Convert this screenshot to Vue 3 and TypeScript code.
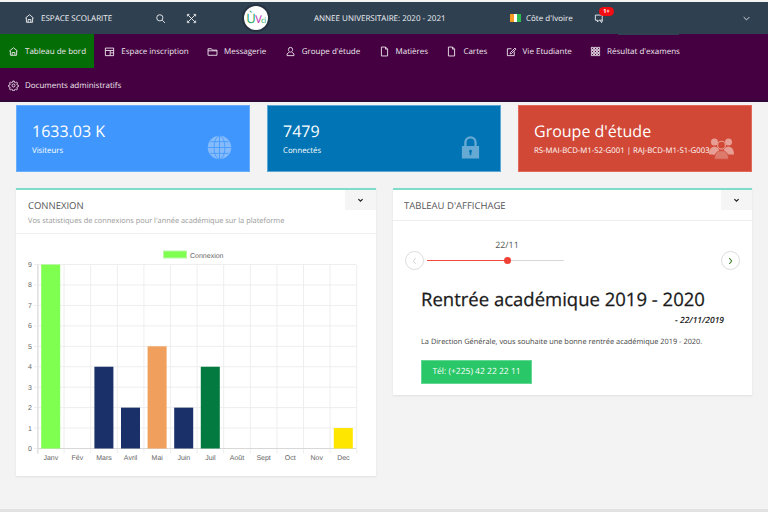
<template>
  <div class="page">
    <header class="topbar">
      <div class="brand">
        <svg class="ico" viewBox="0 0 16 16"><path d="M2 7.500 8 2.500l6 5M3.500 7v6.500h9V7M6 13.500V9.500h4v4" /></svg>
        <span>ESPACE SCOLARITE</span>
      </div>
      <svg class="ico tool" viewBox="0 0 16 16"><circle cx="7" cy="7" r="4.500" /><path d="m10.500 10.500 4 4" /></svg>
      <svg class="ico tool expand" viewBox="0 0 16 16"><path d="M3 3l10 10M13 3 3 13M2 5V2h3M11 2h3v3M14 11v3h-3M5 14H2v-3" /></svg>
      <div class="logo"><span class="logo-mark"><b class="u">Ù</b><b class="v">V</b><b class="c">ci</b></span></div>
      <div class="year">ANNEE UNIVERSITAIRE: 2020 - 2021</div>
      <div class="country">
        <span class="flag"><i class="o"></i><i class="w"></i><i class="g"></i></span>
        <span>Côte d'Ivoire</span>
      </div>
      <div class="chat">
        <svg class="ico" viewBox="0 0 16 16"><path d="M2 3h10v7.500H7.500L5 13v-2.500H2zM9 11l2 3 1.500-3.500" /></svg>
        <span class="badge">1+</span>
      </div>
      <div class="user-tab"></div>
      <svg class="caret" viewBox="0 0 10 6"><path d="m1 1 4 4 4-4" /></svg>
    </header>

    <nav class="menu">
      <a v-for="item in menu" :key="item.label" class="menu-item" :class="{ active: item.active }">
        <svg class="ico" viewBox="0 0 16 16"><path :d="item.icon" /></svg>
        <span>{{ item.label }}</span>
      </a>
    </nav>

    <section class="stats">
      <div v-for="s in stats" :key="s.title" class="stat" :class="s.cls">
        <div class="stat-title">{{ s.title }}</div>
        <div class="stat-sub">{{ s.sub }}</div>
        <svg class="stat-icon" :class="s.cls + '-icon'" viewBox="0 0 32 32">
          <template v-if="s.cls === 'blue'">
            <circle cx="16" cy="16" r="15" fill="currentColor" />
            <ellipse cx="16" cy="16" rx="7" ry="15" fill="none" stroke="#3f97fe" stroke-width="1" />
            <path d="M16 1v30M1 16h30M4 8.500h24M4 23.500h24" fill="none" stroke="#3f97fe" stroke-width="1" />
          </template>
          <template v-else-if="s.cls === 'teal'">
            <path d="M9.500 14V9.500a6.500 6.500 0 0 1 13 0V14" fill="none" stroke="currentColor" stroke-width="3" />
            <path fill-rule="evenodd" d="M5 14h22v16H5zM16 19a2 2 0 0 0-1 3.700V26h2v-3.300A2 2 0 0 0 16 19z" fill="currentColor" />
          </template>
          <template v-else>
            <circle cx="7" cy="9" r="4.500" fill="currentColor" />
            <circle cx="25" cy="9" r="4.500" fill="currentColor" />
            <path d="M0 25c0-7 3-10 7-10s7 3 7 10zM18 25c0-7 3-10 7-10s7 3 7 10z" fill="currentColor" />
            <circle cx="16" cy="13" r="5" fill="#d14836" stroke="currentColor" stroke-width="1.500" />
            <path d="M7 31c0-8 4-11 9-11s9 3 9 11z" fill="#dc7a6c" stroke="#d14836" stroke-width="1" />
          </template>
        </svg>
      </div>
    </section>

    <section class="panels">
      <article class="panel chart-panel">
        <div class="panel-head tall">
          <h2>CONNEXION</h2>
          <p>Vos statistiques de connexions pour l'année académique sur la plateforme</p>
          <button class="collapse"><svg viewBox="0 0 10 6"><path d="m2 1 3 3 3-3" /></svg></button>
        </div>
        <svg class="chart" viewBox="0 0 360 242" width="360" height="242">
          <rect x="147.500" y="17" width="23" height="7" fill="#7fff50" stroke="#b9f7a4" />
          <text x="174" y="23.500" class="legend">Connexion</text>
          <g v-for="n in 10" :key="'h' + n">
            <line x1="18" x2="340" :y1="yOf(n - 1)" :y2="yOf(n - 1)" class="grid" />
            <text x="16" :y="yOf(n - 1) + 2.500" class="tick" text-anchor="end">{{ n - 1 }}</text>
          </g>
          <line v-for="n in 13" :key="'v' + n" :x1="xOf(n - 1)" :x2="xOf(n - 1)" :y1="yOf(9)" :y2="yOf(0) + 5" class="grid" />
          <line x1="22" x2="22" :y1="yOf(9)" :y2="yOf(0) + 5" class="axis" />
          <line x1="22" x2="340" :y1="yOf(0)" :y2="yOf(0)" class="axis" />
          <g v-for="(b, i) in bars" :key="b.label">
            <rect v-if="b.value" :x="xOf(i) + 3.700" :y="yOf(b.value)" width="19" :height="yOf(0) - yOf(b.value)" :fill="b.color" />
            <text :x="xOf(i) + 13.300" y="226" class="month" text-anchor="middle">{{ b.label }}</text>
          </g>
        </svg>
      </article>

      <article class="panel board-panel">
        <div class="panel-head">
          <h2>TABLEAU D'AFFICHAGE</h2>
          <button class="collapse"><svg viewBox="0 0 10 6"><path d="m2 1 3 3 3-3" /></svg></button>
        </div>
        <div class="timeline">
          <button class="round prev"><svg viewBox="0 0 6 10"><path d="M4.500 1.500 1.500 5l3 3.500" /></svg></button>
          <div class="track">
            <span class="date">22/11</span>
            <div class="line"><div class="fill" :style="{ width: progress + '%' }"></div><div class="dot"></div></div>
          </div>
          <button class="round next"><svg viewBox="0 0 6 10"><path d="M1.500 1.500 4.500 5l-3 3.500" /></svg></button>
        </div>
        <div class="notice">
          <h3>Rentrée académique 2019 - 2020</h3>
          <div class="posted">- 22/11/2019</div>
          <p>La Direction Générale, vous souhaite une bonne rentrée académique 2019 - 2020.</p>
          <a class="phone">Tél: (+225) 42 22 22 11</a>
        </div>
      </article>
    </section>
    <div class="foot"></div>
  </div>
</template>

<script setup lang="ts">
const menu = [
  { label: 'Tableau de bord', active: true, icon: 'M2 7.500 8 2.500l6 5M3.500 7v6.500h9V7M6 13.500V9.500h4v4' },
  { label: 'Espace inscription', icon: 'M2 3h12v11H2zM2 6.500h12M9 6.500V14M9 10h5' },
  { label: 'Messagerie', icon: 'M1.500 4h5l1.500 2h6.500v7.500h-13zM1.500 7h13' },
  { label: "Groupe d'étude", icon: 'M8 2a3 3 0 0 1 3 3c0 2-1 4-3 4S5 7 5 5a3 3 0 0 1 3-3zM6 9l-3 2.500V14h10v-2.500L10 9' },
  { label: 'Matières', icon: 'M3.500 1.500h6l3 3v10h-9zM9.500 1.500v3h3' },
  { label: 'Cartes', icon: 'M3.500 1.500h6l3 3v10h-9zM9.500 1.500v3h3' },
  { label: 'Vie Etudiante', icon: 'M12 8v6H2V4h6M6.500 9.500 13 3l1.500 1.500L8 11l-2 .5z' },
  { label: "Résultat d'examens", icon: 'M2 2h3v3H2zM6.500 2h3v3h-3zM11 2h3v3h-3zM2 6.500h3v3H2zM6.500 6.500h3v3h-3zM11 6.500h3v3h-3zM2 11h3v3H2zM6.500 11h3v3h-3zM11 11h3v3h-3z' },
  { label: 'Documents administratifs', icon: 'M8 5.800a2.200 2.200 0 1 1 0 4.400 2.200 2.200 0 0 1 0-4.400zM7 1.500h2l.4 1.800 1.400.6 1.600-1 1.400 1.400-1 1.600.6 1.400 1.800.4v2l-1.800.4-.6 1.400 1 1.600-1.400 1.400-1.600-1-1.400.6-.4 1.800H7l-.4-1.800-1.400-.6-1.600 1-1.400-1.400 1-1.600-.6-1.400-1.800-.4v-2l1.800-.4.6-1.400-1-1.600 1.400-1.400 1.600 1 1.400-.6z' }
]

const stats = [
  { title: '1633.03 K', sub: 'Visiteurs', cls: 'blue' },
  { title: '7479', sub: 'Connectés', cls: 'teal' },
  { title: "Groupe d'étude", sub: 'RS-MAI-BCD-M1-S2-G001 | RAJ-BCD-M1-S1-G003 |', cls: 'red' }
]

const bars = [
  { label: 'Janv', value: 9, color: '#7fff50' },
  { label: 'Fév', value: 0, color: '' },
  { label: 'Mars', value: 4, color: '#1a3068' },
  { label: 'Avril', value: 2, color: '#1a3068' },
  { label: 'Mai', value: 5, color: '#f0a05c' },
  { label: 'Juin', value: 2, color: '#1a3068' },
  { label: 'Juil', value: 4, color: '#037a3f' },
  { label: 'Août', value: 0, color: '' },
  { label: 'Sept', value: 0, color: '' },
  { label: 'Oct', value: 0, color: '' },
  { label: 'Nov', value: 0, color: '' },
  { label: 'Dec', value: 1, color: '#ffe600' }
]

const progress = 58.500

// coordonnées du graphique, dans le repère du svg
const xOf = (i: number) => 21.500 + i * 26.600
const yOf = (v: number) => 214.500 - v * 20.440
</script>

<style>
body {
  background: #f3f3f3;
}
</style>

<style scoped>
.page {
  width: 768px;
  height: 512px;
  overflow: hidden;
  background: #f3f3f3;
  font-family: "Open Sans", "Noto Sans", sans-serif;
  text-rendering: geometricPrecision;
  position: relative;
}

.ico {
  width: 11px;
  height: 11px;
  flex: none;
  fill: none;
  stroke: currentColor;
  stroke-width: 1.300;
}

.topbar {
  height: 32px;
  margin-top: 2px;
  background: #2f4050;
  color: #f1f3f5;
  display: flex;
  align-items: center;
  font-size: 8px;
  position: relative;
}

.brand {
  display: flex;
  align-items: center;
  gap: 6px;
  margin-left: 24px;
  width: 131px;
}

.tool {
  margin-right: 20px;
}

.expand {
  margin-right: 0;
}

.logo {
  width: 24px;
  height: 24px;
  margin-left: 47px;
  border-radius: 50%;
  background: #fff;
  box-shadow: 0 0 0 2px #26323f;
  display: flex;
  align-items: center;
  justify-content: center;
}

.logo-mark {
  font-size: 11px;
  letter-spacing: -0.6px;
  line-height: 1;
}

.logo-mark b {
  font-weight: 400;
}

.u { color: #1fa55e; font-size: 13px; }
.v { color: #b52bb0; }
.c { color: #27ae60; font-size: 8px; }

.year {
  margin-left: 46px;
  width: 196px;
  white-space: nowrap;
}

.country {
  display: flex;
  align-items: center;
  gap: 5px;
  width: 84px;
}

.flag {
  display: flex;
  width: 11px;
  height: 8px;
}

.flag i {
  flex: 1;
}

.o { background: #f59a23; }
.w { background: #fff; }
.g { background: #2dbb4f; }

.chat {
  position: relative;
  display: flex;
}

.badge {
  position: absolute;
  left: 5px;
  top: -6px;
  width: 15px;
  height: 9px;
  border-radius: 5px;
  background: #f20d12;
  color: #fff;
  font-size: 5.500px;
  font-weight: 700;
  line-height: 9px;
  text-align: center;
}

.user-tab {
  position: absolute;
  left: 618px;
  bottom: -1px;
  width: 61px;
  height: 2px;
  background: #2f4050;
}

.caret {
  width: 7px;
  height: 5px;
  margin-left: auto;
  margin-right: 18px;
  fill: none;
  stroke: #e6e9ec;
  stroke-width: 1.300;
}

.menu {
  height: 66px;
  background: #440040;
  border-bottom: 2px solid #2e0a38;
  display: flex;
  flex-wrap: wrap;
  align-content: flex-start;
  color: #f0e8ef;
  font-size: 8px;
}

.menu-item {
  height: 34px;
  display: flex;
  align-items: center;
  gap: 6px;
  padding: 0 8px;
  margin-right: 2.300px;
  white-space: nowrap;
}

.menu-item.active {
  background: #056d06;
}

.stats {
  display: grid;
  grid-template-columns: repeat(3, 234px);
  column-gap: 17px;
  padding: 3px 0 0 16px;
}

.stat {
  height: 67px;
  position: relative;
  box-sizing: border-box;
  color: #fff;
}

.stat-title {
  font-size: 16px;
  line-height: 22px;
}

.stat-sub {
  font-size: 7.800px;
  line-height: 12px;
  margin-top: 3px;
  white-space: nowrap;
}

.stat-icon {
  position: absolute;
  right: 17px;
  bottom: 11px;
  width: 25px;
  height: 25px;
}

.red-icon {
  width: 29px;
  height: 25px;
  right: 15px;
}

.blue { background: #3f97fe; border: 1px solid #6aaefb; padding: 14px 15px 0; }
.teal { background: #0074b5; border: 1px solid #5da7d4; padding: 14px 15px 0; }
.red { background: #d14836; border: 1px solid #e0695a; padding: 14px 15px 0; }

.blue-icon { color: #85bbfb; }
.teal-icon { color: #66a9d3; }
.red-icon { color: #e79e94; }

.panels {
  display: grid;
  grid-template-columns: 360px 359px;
  column-gap: 17px;
  align-items: start;
  padding: 16px 0 0 16px;
}

.panel {
  background: #fff;
  border-top: 2px solid #7fdcca;
  box-shadow: 0 1px 2px rgba(0, 0, 0, 0.08);
}

.panel-head {
  position: relative;
  height: 31px;
  box-sizing: border-box;
  padding: 8px 11px 0;
  border-bottom: 1px solid #eeeeee;
  color: #555;
}

.panel-head.tall {
  height: 44px;
  padding-left: 12px;
}

.panel-head h2 {
  margin: 0;
  font-size: 9.500px;
  font-weight: 400;
  line-height: 15px;
}

.panel-head p {
  margin: 3px 0 0;
  font-size: 7.400px;
  line-height: 10px;
  color: #9a9a9a;
  white-space: nowrap;
}

.collapse {
  position: absolute;
  top: 0;
  right: 0;
  width: 31px;
  height: 20px;
  padding: 0;
  border: 0;
  background: #f5f5f5;
  display: flex;
  align-items: center;
  justify-content: center;
}

.collapse svg {
  width: 7px;
  height: 5px;
  fill: none;
  stroke: #222;
  stroke-width: 1.800;
}

.chart {
  display: block;
}

.legend,
.tick,
.month {
  font: 7px "Liberation Sans", sans-serif;
  fill: #666;
}

.grid {
  stroke: #eeeeee;
  stroke-width: 1;
}

.axis {
  stroke: #d8d8d8;
  stroke-width: 1;
}

.board-panel {
  height: 205px;
}

.timeline {
  display: flex;
  align-items: flex-end;
  padding: 19px 12px 0;
  height: 30px;
}

.round {
  width: 19px;
  height: 19px;
  box-sizing: border-box;
  border-radius: 50%;
  border: 1px solid #ddd;
  background: #fff;
  padding: 0;
  display: flex;
  align-items: center;
  justify-content: center;
}

.round svg {
  width: 5px;
  height: 8px;
  fill: none;
  stroke-width: 1;
}

.prev svg { stroke: #c8c8c8; }
.next svg { stroke: #3f7d2c; stroke-width: 1.300; }

.track {
  width: 137px;
  margin-left: 3px;
  margin-right: auto;
  position: relative;
  height: 19px;
}

.date {
  position: absolute;
  left: 0;
  width: 160px;
  top: -12px;
  text-align: center;
  font-size: 8.800px;
  color: #555;
}

.line {
  position: absolute;
  left: 0;
  right: 0;
  top: 9px;
  height: 1px;
  background: #d8d8d8;
}

.fill {
  height: 1px;
  background: #f0483e;
}

.dot {
  position: absolute;
  left: 77px;
  top: -3px;
  width: 7px;
  height: 7px;
  border-radius: 50%;
  background: #ef4136;
}

.notice {
  padding: 17px 28px 0;
  color: #1a1a1a;
}

.notice h3 {
  margin: 0;
  font-size: 18.500px;
  font-weight: 400;
  -webkit-text-stroke: 0.25px #1a1a1a;
  line-height: 26px;
  white-space: nowrap;
}

.posted {
  text-align: right;
  font-size: 8.500px;
  font-weight: 600;
  font-style: italic;
  margin-top: 2px;
  line-height: 12px;
}

.notice p {
  margin: 10px 0 0;
  font-size: 7.400px;
  line-height: 11px;
  color: #444;
  white-space: nowrap;
}

.phone {
  display: block;
  width: 111px;
  height: 24px;
  box-sizing: border-box;
  margin-top: 12px;
  background: #2ac769;
  border: 1px solid #62d894;
  color: #fff;
  font-size: 8.500px;
  line-height: 22px;
  text-align: center;
}

.foot {
  position: absolute;
  left: 0;
  right: 0;
  bottom: 0;
  height: 3px;
  background: #e2e2e2;
}
</style>
